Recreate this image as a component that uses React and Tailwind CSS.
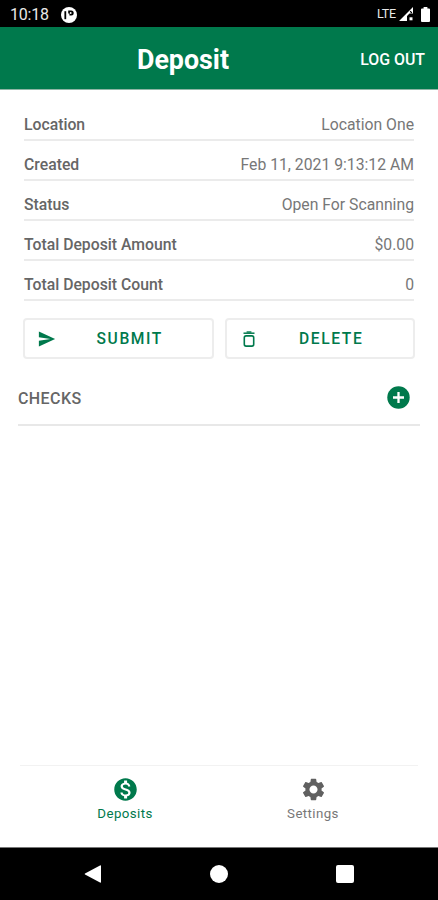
import { IoMdSend } from 'react-icons/io';
import { MdMonetizationOn, MdSettings } from 'react-icons/md';

const details = [
  { label: 'Location', value: 'Location One' },
  { label: 'Created', value: 'Feb 11, 2021 9:13:12 AM' },
  { label: 'Status', value: 'Open For Scanning' },
  { label: 'Total Deposit Amount', value: '$0.00' },
  { label: 'Total Deposit Count', value: '0' },
];

const TrashIcon = () => (
  <svg width="12" height="16" viewBox="0 0 12 16" fill="none" stroke="#00794c">
    <path d="M0.5 2.2H11.5" strokeWidth="1.5" />
    <path d="M3.6 1H8.4" strokeWidth="1.4" />
    <rect x="1.3" y="4.9" width="9.4" height="10.2" rx="1.8" strokeWidth="1.6" />
  </svg>
);

const AddIcon = () => (
  <svg width="23" height="23" viewBox="0 0 23 23">
    <circle cx="11.5" cy="11.5" r="11.2" fill="#00794c" />
    <path d="M11.5 6V17M6 11.5H17" stroke="#fff" strokeWidth="2.3" />
  </svg>
);

const StatusBar = () => (
  <div className="flex h-[27px] items-center justify-between bg-black pl-[10px] pr-[8px] text-white">
    <div className="flex items-center gap-[12px] pt-[2px]">
      <span className="text-[16px] leading-4 tracking-[-0.2px] text-[#e8e8e8]">10:18</span>
      <svg width="16" height="16" viewBox="0 0 16 16">
        <circle cx="8" cy="8" r="8" fill="#fff" />
        <path d="M3.4 4.2H5.2V12.2H3.4Z" fill="#000" />
        <path d="M7.2 3.6H10.2A2.5 2.5 0 0 1 10.2 8.6H8.4V6.6H7.2Z" fill="#000" />
        <circle cx="9.7" cy="6" r="0.9" fill="#fff" />
      </svg>
    </div>
    <div className="flex items-center pt-[1px]">
      <span className="text-[12.5px] leading-4 tracking-[-0.2px] text-[#e8e8e8]">LTE</span>
      <svg className="ml-[3px]" width="15" height="14" viewBox="0 0 15 14">
        <path d="M0 14L14 0V6.5H10.5L8 9V14Z" fill="#fff" />
        <path d="M11.2 4.2L12.8 6" stroke="#000" strokeWidth="1.2" />
        <path d="M10.5 10.3H13.5V13.3H10.5Z" fill="#fff" />
      </svg>
      <svg className="ml-[7px]" width="9" height="15" viewBox="0 0 9 15">
        <path d="M2.6 0H6.4V1.5H8A1 1 0 0 1 9 2.5V14A1 1 0 0 1 8 15H1A1 1 0 0 1 0 14V2.5A1 1 0 0 1 1 1.5H2.6Z" fill="#fff" />
      </svg>
    </div>
  </div>
);

const Header = () => (
  <header className="grid h-[63px] grid-cols-[1fr_auto_1fr] items-center border-b border-[#8fb5a5] bg-[#00794c] pr-[13px] pt-[3px] text-white">
    <span />
    <h1 className="pr-[59px] text-[26.8px] leading-8 font-bold">Deposit</h1>
    <button type="button" className="justify-self-end whitespace-nowrap text-[15.9px] font-medium">
      LOG OUT
    </button>
  </header>
);

const ActionButton = ({ icon, label }) => (
  <button
    type="button"
    className="flex h-[41px] flex-1 items-center rounded-[4px] border-2 border-[#ededed] text-[#00794c]"
  >
    <span className="flex w-[44px] justify-center">{icon}</span>
    <span className="flex-1 pr-[21px] pt-[2px] text-center text-[15.6px] font-medium tracking-[1.6px]">{label}</span>
  </button>
);

const App = () => {
  return (
    <div className="flex h-[900px] w-[438px] flex-col overflow-hidden bg-white font-[Roboto,sans-serif]">
      <StatusBar />
      <Header />
      <main className="flex-1 px-[18px] pt-[11px]">
        <dl className="px-[6px]">
          {details.map(({ label, value }) => (
            <div
              key={label}
              className="flex h-[40px] items-center justify-between border-b-2 border-[#ebebeb] pt-[10px] text-[15.75px] text-[#666]"
            >
              <dt className="font-medium">{label}</dt>
              <dd className="text-[#777]">{value}</dd>
            </div>
          ))}
        </dl>
        <div className="mt-[17px] flex gap-[11px] px-[5px]">
          <ActionButton icon={<IoMdSend size={20} />} label="SUBMIT" />
          <ActionButton icon={<TrashIcon />} label="DELETE" />
        </div>
        <div className="mt-[12px] flex h-[55px] items-center justify-between border-b-2 border-[#e8e8e8] pr-[10px] text-[#666]">
          <h2 className="pt-[3px] text-[16px] font-medium tracking-[0.4px]">CHECKS</h2>
          <AddIcon />
        </div>
      </main>
      <nav className="mx-[20px] flex h-[82px] justify-center border-t border-[#f2f2f2] pt-[10px] text-[13.3px] tracking-[0.4px] text-[#777]">
        <div className="flex w-[188px] flex-col items-center text-[#00794c]">
          <MdMonetizationOn size={27} />
          <span className="leading-[21px]">Deposits</span>
        </div>
        <div className="flex w-[188px] flex-col items-center">
          <MdSettings size={27} color="#606060" />
          <span className="leading-[21px]">Settings</span>
        </div>
      </nav>
      <footer className="flex h-[53px] items-center justify-center gap-[108px] border-t border-[#777] bg-black">
        <svg width="18" height="18" viewBox="0 0 18 18" fill="#fff">
          <path d="M16 0.5Q17 0 17 1V17Q17 18 16 17.5L1 9.5Q0.2 9 1 8.5Z" />
        </svg>
        <span className="size-[18px] rounded-full bg-white" />
        <span className="size-[18px] rounded-[2px] bg-white" />
      </footer>
    </div>
  );
};

export default App;
